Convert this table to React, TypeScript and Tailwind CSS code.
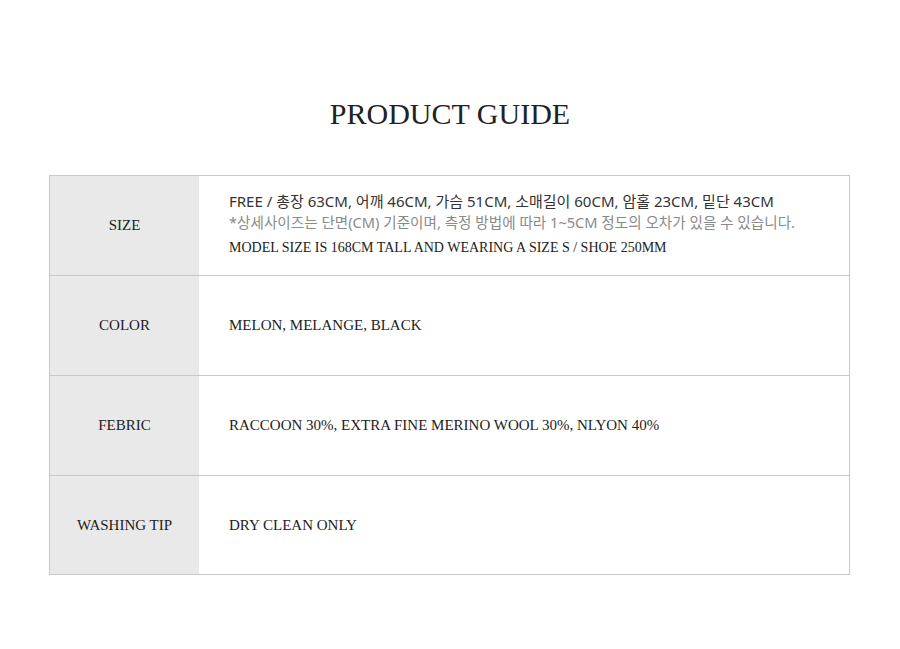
import React from "react";

function Row({ label, children, last, top }: { label: string; children: React.ReactNode; last?: boolean; top?: boolean }) {
  return (
    <div className={last ? "flex h-[98px]" : "flex h-[100px] border-b border-[#c8c8c8]"}>
      <div className="w-[149px] shrink-0 bg-[#e9e9e9] flex items-center justify-center text-[15px] text-[#222] font-['Liberation_Serif',serif]">
        {label}
      </div>
      <div className={top ? "flex-1 flex flex-col justify-start pt-[15px] pl-[30px]" : "flex-1 flex flex-col justify-center pl-[30px]"}>{children}</div>
    </div>
  );
}

export default function App() {
  return (
    <div className="w-[900px] h-[649px] bg-white">
      <div className="pt-[96px] text-center text-[30px] leading-[36px] text-[#222] font-['Liberation_Serif',serif]">
        PRODUCT GUIDE
      </div>
      <div className="mt-[43px] ml-[49px] w-[801px] border border-[#c8c8c8]">
        <Row label="SIZE" top>
          <div className="text-[15px] leading-[21px] text-[#333] font-['Noto_Sans','Noto_Sans_CJK_KR',sans-serif]">
            FREE / 총장 63CM, 어깨 46CM, 가슴 51CM, 소매길이 60CM, 암홀 23CM, 밑단 43CM
          </div>
          <div className="text-[14.6px] leading-[21px] text-[#8a8a8a] font-['Noto_Sans','Noto_Sans_CJK_KR',sans-serif]">
            *상세사이즈는 단면(CM) 기준이며, 측정 방법에 따라 1~5CM 정도의 오차가 있을 수 있습니다.
          </div>
          <div className="mt-[5px] text-[14px] leading-[20px] text-[#222] font-['Liberation_Serif',serif]">
            MODEL SIZE IS 168CM TALL AND WEARING A SIZE S / SHOE 250MM
          </div>
        </Row>
        <Row label="COLOR">
          <div className="text-[15px] text-[#222] font-['Liberation_Serif',serif]">MELON, MELANGE, BLACK</div>
        </Row>
        <Row label="FEBRIC">
          <div className="text-[15px] text-[#222] font-['Liberation_Serif',serif]">RACCOON 30%, EXTRA FINE MERINO WOOL 30%, NLYON 40%</div>
        </Row>
        <Row label="WASHING TIP" last>
          <div className="text-[15px] text-[#222] font-['Liberation_Serif',serif]">DRY CLEAN ONLY</div>
        </Row>
      </div>
    </div>
  );
}
